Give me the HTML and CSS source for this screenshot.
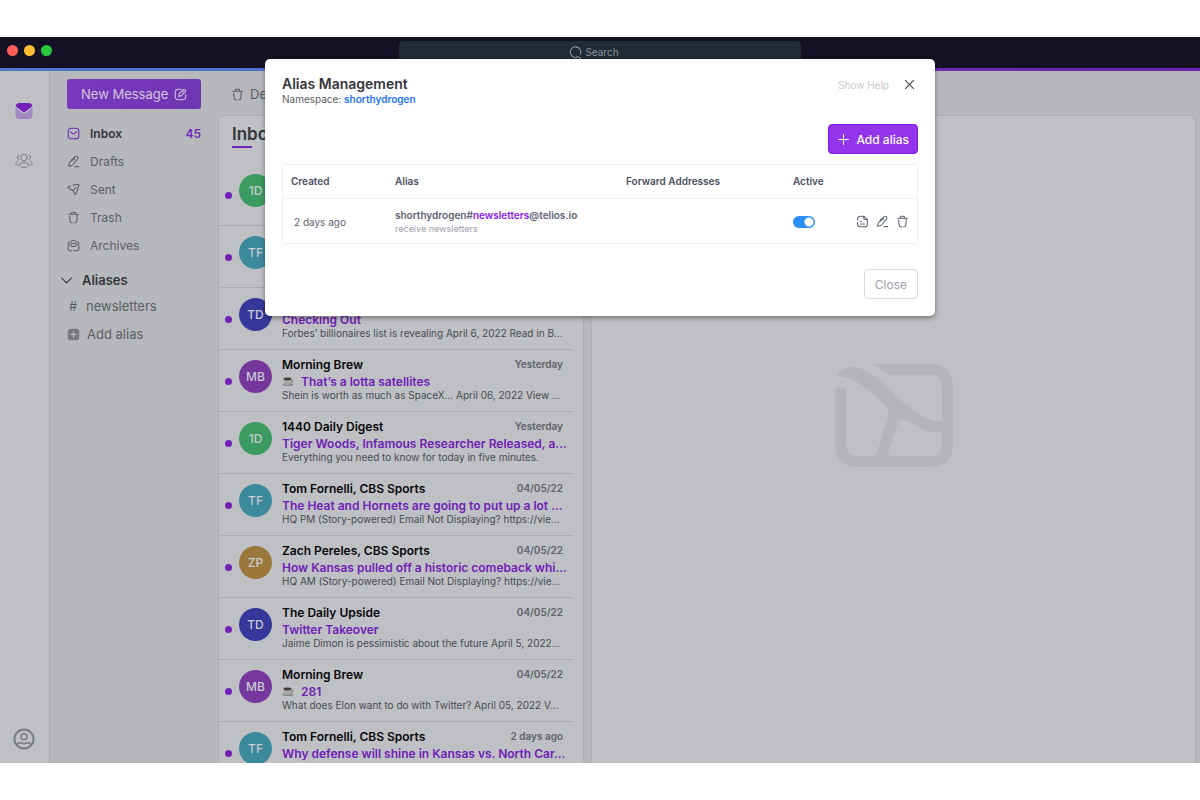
FILE: index.html
```html
<!DOCTYPE html>
<html lang="en">
<head>
<meta charset="utf-8">
<title>Telios</title>
<link rel="stylesheet" href="styles.css">
</head>
<body>
<svg class="defs" aria-hidden="true">
  <symbol id="trash" viewBox="0 0 16 16"><path d="M2 4h12M5.6 4V2.4Q5.6 1.5 6.5 1.5h3q.9 0 .9.9V4M3.3 6.3l.7 7q.1 1.2 1.3 1.2H7M12.7 4.5L12 13.3q-.1 1.2-1.3 1.2H9.5"/></symbol>
  <symbol id="pen" viewBox="0 0 16 16"><path d="M5 6.300l5.300-4.300q1.400-1.100 2.600.1 1.200 1.300.1 2.600L7.200 12q-.6.700-1.500.9L2 13.800l.8-3.500q.2-.9.900-1.500L9.500 4.500M10 14.300h4.500"/></symbol>
</svg>
<div class="window">
  <header class="titlebar">
    <div class="lights"><span class="light red"></span><span class="light yellow"></span><span class="light green"></span></div>
    <button class="search" type="button">
      <svg class="icon" viewBox="0 0 16 16"><path d="M11.600 13A6.500 6.500 0 1 1 14 10.200M13 14l1.300 1.300"/></svg>
      Search
    </button>
  </header>
  <div class="stripe"></div>
  <div class="app">
    <nav class="rail" aria-label="Sections">
      <a class="rail-link" href="#mail" aria-label="Mail">
        <svg class="rail-icon" viewBox="0 0 18 18"><path class="mail-body" d="M.5 5.500L7.500 11.300q1.500 1.100 3 0l7-5.800V13q0 4-4 4h-9q-4 0-4-4z"/><path class="mail-flap" d="M.7 4.200Q1 1 4.500 1h9q3.500 0 3.800 3.200L10.300 9.800q-1.300 1-2.600 0z"/></svg>
      </a>
      <a class="rail-link" href="#contacts" aria-label="Contacts">
        <svg class="rail-icon line" viewBox="0 0 18 18"><circle cx="9" cy="5.500" r="3.300"/><path d="M4 3a2.500 2.500 0 0 0 0 4.700M14 3a2.500 2.500 0 0 1 0 4.700M3 9.800q-2.500.4-2.500 1.800 0 1 1.800 1.400M15 9.800q2.500.4 2.500 1.800 0 1-1.800 1.400M5 14.300q-1-1-.4-2 1.300-1.700 4.400-1.700 3.300 0 4.400 1.700.5 1.100-.4 2M11 15.300q-2.300.6-4.300-.1"/></svg>
      </a>
      <a class="rail-link profile" href="#account" aria-label="Account">
        <svg class="rail-icon user" viewBox="0 0 22 22"><circle class="ring" cx="11" cy="11" r="9.600"/><circle cx="11" cy="8.800" r="3"/><path d="M4.200 17.500q.5-2.700 2.800-2.800 1.600 0 2.700.5 1.300.4 2.600 0 1.100-.5 2.700-.5 2.300.1 2.800 2.800"/></svg>
      </a>
    </nav>
    <aside class="sidebar">
      <button class="compose" type="button">New Message
        <svg class="icon" viewBox="0 0 16 16"><path d="M9 1.500H5.500q-4 0-4 4v5q0 4 4 4h5q4 0 4-4V8M6.500 6.800L11.400 2q.9-.9 1.900.1l.7.700q.9.900 0 1.800L9.100 9.500 5.800 10.300z M10.300 3.200l2.400 2.400"/></svg>
      </button>
      <ul class="folders">
        <li><a class="folder current" href="#inbox"><svg class="icon" viewBox="0 0 16 16"><rect x="1.500" y="1.500" width="13" height="13" rx="3.500"/><path d="M4.500 6l2.400 2.200q1.100.9 2.200 0L11.500 6"/></svg>Inbox<span class="count">45</span></a></li>
        <li><a class="folder" href="#drafts"><svg class="icon"><use href="#pen"/></svg>Drafts</a></li>
        <li><a class="folder" href="#sent"><svg class="icon" viewBox="0 0 16 16"><path d="M7.500 2.800l6.200-1.300q1.200-.2.900 1L11.200 13q-.7 2-1.700.2L7.500 9.500 11 5.500M7.500 9.500L2.200 6.500Q.3 5.200 2.200 4.200L4.500 3.600"/></svg>Sent</a></li>
        <li><a class="folder" href="#trash-folder"><svg class="icon"><use href="#trash"/></svg>Trash</a></li>
        <li><a class="folder" href="#archives"><svg class="icon" viewBox="0 0 16 16"><path d="M2 7.500Q.7 4.800 3.200 3.700 4.800 3.400 5 3q3-2.500 6 0 .2.400 1.800.7 2.500 1.100 1.200 3.800M1.200 9v2.500q0 3 3 3h1.500M14.800 9v2.500q0 3-3 3H8M1.500 7.500h3.200l1.500 1.800h3.600l1.500-1.800h3.200M5 5.500h6"/></svg>Archives</a></li>
      </ul>
      <button class="group" type="button"><svg class="icon" viewBox="0 0 16 16"><path d="M2 5l6 6 6-6"/></svg>Aliases</button>
      <ul class="aliases">
        <li><a class="alias" href="#newsletters"><span class="hash">#</span>newsletters</a></li>
        <li><button class="alias" type="button"><svg class="icon solid" viewBox="0 0 16 16"><rect x="1.500" y="1.500" width="13" height="13" rx="3"/><path d="M8 5v6M5 8h6"/></svg>Add alias</button></li>
      </ul>
    </aside>
    <main class="main">
      <div class="toolbar"><button class="tool" type="button"><svg class="icon"><use href="#trash"/></svg>Delete</button></div>
      <div class="panes">
        <section class="list">
          <h1 class="list-title">Inbox</h1>
          <article class="mail"><span class="dot"></span><span class="avatar green-bg">1D</span></article>
          <article class="mail"><span class="dot"></span><span class="avatar teal-bg">TF</span></article>
          <article class="mail"><span class="dot"></span><span class="avatar blue-bg">TD</span><div class="text"><div class="top"></div><p class="subject">Checking Out</p><p class="preview">Forbes’ billionaires list is revealing April 6, 2022 Read in B...</p></div></article>
          <article class="mail"><span class="dot"></span><span class="avatar purple-bg">MB</span><div class="text"><div class="top"><h2 class="from">Morning Brew</h2><time class="date">Yesterday</time></div><p class="subject"><svg class="cup" viewBox="0 0 12 12"><ellipse cx="6" cy="9.500" rx="5.500" ry="1.600" fill="#85878b"/><path d="M1.500 4h8q0 5-2.500 6H4Q1.500 9 1.500 4z" fill="#aaa9aa"/><ellipse cx="5.500" cy="4" rx="4" ry="1.400" fill="#493b36"/><path d="M9.500 5q2.300 0 1 1.800l-1.700.6" fill="none" stroke="#777"/></svg>That’s a lotta satellites</p><p class="preview">Shein is worth as much as SpaceX... April 06, 2022 View ...</p></div></article>
          <article class="mail"><span class="dot"></span><span class="avatar green-bg">1D</span><div class="text"><div class="top"><h2 class="from">1440 Daily Digest</h2><time class="date">Yesterday</time></div><p class="subject">Tiger Woods, Infamous Researcher Released, a...</p><p class="preview">Everything you need to know for today in five minutes.</p></div></article>
          <article class="mail"><span class="dot"></span><span class="avatar teal-bg">TF</span><div class="text"><div class="top"><h2 class="from">Tom Fornelli, CBS Sports</h2><time class="date">04/05/22</time></div><p class="subject">The Heat and Hornets are going to put up a lot ...</p><p class="preview">HQ PM (Story-powered) Email Not Displaying? https://vie...</p></div></article>
          <article class="mail"><span class="dot"></span><span class="avatar gold-bg">ZP</span><div class="text"><div class="top"><h2 class="from">Zach Pereles, CBS Sports</h2><time class="date">04/05/22</time></div><p class="subject">How Kansas pulled off a historic comeback whi...</p><p class="preview">HQ AM (Story-powered) Email Not Displaying? https://vie...</p></div></article>
          <article class="mail"><span class="dot"></span><span class="avatar blue-bg">TD</span><div class="text"><div class="top"><h2 class="from">The Daily Upside</h2><time class="date">04/05/22</time></div><p class="subject">Twitter Takeover</p><p class="preview">Jaime Dimon is pessimistic about the future April 5, 2022...</p></div></article>
          <article class="mail"><span class="dot"></span><span class="avatar purple-bg">MB</span><div class="text"><div class="top"><h2 class="from">Morning Brew</h2><time class="date">04/05/22</time></div><p class="subject"><svg class="cup" viewBox="0 0 12 12"><ellipse cx="6" cy="9.500" rx="5.500" ry="1.600" fill="#85878b"/><path d="M1.500 4h8q0 5-2.500 6H4Q1.500 9 1.500 4z" fill="#aaa9aa"/><ellipse cx="5.500" cy="4" rx="4" ry="1.400" fill="#493b36"/><path d="M9.500 5q2.300 0 1 1.800l-1.700.6" fill="none" stroke="#777"/></svg>281</p><p class="preview">What does Elon want to do with Twitter? April 05, 2022 V...</p></div></article>
          <article class="mail"><span class="dot"></span><span class="avatar teal-bg">TF</span><div class="text"><div class="top"><h2 class="from">Tom Fornelli, CBS Sports</h2><time class="date">2 days ago</time></div><p class="subject">Why defense will shine in Kansas vs. North Car...</p></div></article>
        </section>
        <section class="reader" aria-label="Message">
          <svg class="mark" viewBox="0 0 150 130"><path d="M55 14H111q23 0 23 23V94q0 23-23 23H39q-23 0-23-23V38q5-2 11 0V94q0 12 12 12h14q4 0 6-6l9.500-32q2-8-2.500-12.500C53 42 36 27 18.500 25.500 23 17.500 33 14 44 19.500 61 28 73 44 89 56q16 13 26 15h8V37q0-12-12-12H69.500zM123 82q-11 2-22-4-7-4-13-7.200-6-3-9 2.200L70 100q-1.500 6 4 6h37q12 0 12-12z" fill-rule="evenodd"/></svg>
        </section>
      </div>
    </main>
  </div>
  <div class="overlay">
    <section class="dialog" role="dialog" aria-labelledby="dialog-title">
      <div class="dialog-head">
        <div>
          <h2 class="dialog-title" id="dialog-title">Alias Management</h2>
          <p class="namespace">Namespace: <span class="ns">shorthydrogen</span></p>
        </div>
        <div class="head-actions">
          <button class="help" type="button">Show Help</button>
          <button class="dismiss" type="button" aria-label="Dismiss"><svg class="icon" viewBox="0 0 16 16"><path d="M3 3l10 10M13 3L3 13"/></svg></button>
        </div>
      </div>
      <button class="add" type="button"><svg class="icon" viewBox="0 0 16 16"><path d="M8 2v12M2 8h12"/></svg>Add alias</button>
      <div class="frame">
        <table class="table">
          <thead><tr><th class="c-created">Created</th><th class="c-alias">Alias</th><th class="c-forward">Forward Addresses</th><th class="c-active">Active</th><th aria-label="Actions"></th></tr></thead>
          <tbody><tr>
            <td class="created">2 days ago</td>
            <td><p class="address">shorthydrogen#<span class="tag">newsletters</span>@telios.io</p><p class="note">receive newsletters</p></td>
            <td></td>
            <td><input class="toggle" type="checkbox" aria-label="Active" checked></td>
            <td><div class="actions">
              <button class="act" type="button" aria-label="Details"><svg class="icon" viewBox="0 0 16 16"><path d="M2 6V5q0-3.500 3.500-3.500h4.300L14 5.700V11q0 3.500-3.500 3.500h-5Q2 14.500 2 11V9M9.500 2v2q0 1.500 1.500 1.500h2.500M5.500 8h1.500M5.500 11h5"/></svg></button>
              <button class="act" type="button" aria-label="Edit"><svg class="icon"><use href="#pen"/></svg></button>
              <button class="act" type="button" aria-label="Delete"><svg class="icon"><use href="#trash"/></svg></button>
            </div></td>
          </tr></tbody>
        </table>
      </div>
      <button class="close" type="button">Close</button>
    </section>
  </div>
</div>
</body>
</html>
```
FILE: styles.css
```css
* { box-sizing: border-box; }
body { margin: 0; background: #fff; font-family: Inter, "Liberation Sans", sans-serif; font-size: 12px; color: #5c5e64; }
h1, h2, p, ul { margin: 0; padding: 0; list-style: none; }
button { font: inherit; color: inherit; background: none; border: 0; padding: 0; }
a { color: inherit; text-decoration: none; }
.defs { display: none; }
.icon { width: 13px; height: 13px; flex: none; fill: none; stroke: currentColor; stroke-width: 1.3; stroke-linecap: round; stroke-linejoin: round; }

.window { position: relative; display: flex; flex-direction: column; height: calc(100vh - 74px); margin: 37px 0; overflow: hidden; background: #b6b8bc; }
.titlebar { display: flex; justify-content: center; flex: none; height: 31px; background: #151125; position: relative; padding-top: 4px; }
.lights { position: absolute; left: 7px; top: 8px; display: flex; gap: 6px; }
.light { width: 11px; height: 11px; border-radius: 50%; }
.red { background: #ff5f57; }
.yellow { background: #febc2e; }
.green { background: #28c840; }
.search { display: flex; align-items: center; justify-content: center; gap: 3px; width: 402px; height: 22px; padding-right: 12px; border-radius: 4px 4px 0 0; background: #222a36; color: #8d9299; font-size: 10px; }
.stripe { flex: none; height: 3px; background: linear-gradient(90deg, #4a7cc8, #4c6fc8 22%, #6c2cb4 78%, #6c22b2); }

.app { display: flex; flex: 1; min-height: 0; }
.rail { display: flex; flex-direction: column; flex: none; width: 50px; padding: 31px 2px 13px 0; align-items: center; background: #bec0c4; border-right: 1px solid #adafb4; color: #777a80; }
.rail-link { display: flex; margin-bottom: 32px; }
.rail-icon { width: 18px; height: 18px; }
.line, .user { fill: none; stroke: currentColor; stroke-linecap: round; }
.mail-body { fill: #a188c5; }
.mail-flap { fill: #7020b8; }
.profile { margin: auto 0 0; }
.user { width: 22px; height: 22px; stroke-width: 1.5; }
.ring { stroke-width: 2; }

.sidebar { flex: none; width: 168px; padding: 8px 17px; }
.compose { display: flex; align-items: center; justify-content: space-between; width: 134px; height: 30px; padding: 0 14px; border-radius: 3px; background: linear-gradient(90deg, #7a38be, #6f35b1); color: #cfc6dc; font-size: 12px; margin-bottom: 10px; }
.compose { font-size: 13px; }
.folder { display: flex; align-items: center; gap: 10px; height: 28px; }
.current { color: #34353a; font-weight: 600; }
.current .icon, .count { color: #7128b8; }
.count { margin-left: auto; }
.group { display: flex; align-items: center; gap: 9px; height: 24px; margin: 9px 0 0 -7px; color: #34353a; font-size: 13px; font-weight: 600; }
.alias { display: flex; align-items: center; gap: 7px; height: 28px; font-size: 13px; }
.hash { width: 12px; text-align: center; }
.solid { fill: #77797e; stroke: #77797e; }
.solid path { stroke: #c1c3c7; }

.main { display: flex; flex-direction: column; flex: 1; min-width: 0; padding-right: 4px; }
.toolbar { flex: none; height: 44px; padding: 8px 13px; }
.tool { display: flex; align-items: center; gap: 6px; height: 30px; font-size: 13px; }
.panes { display: flex; gap: 7px; flex: 1; min-height: 0; }
.list, .reader { background: #bec0c4; border: 1px solid #adafb3; border-bottom: 0; border-radius: 6px 6px 0 0; }
.list { flex: none; width: 366px; padding-right: 10px; overflow: hidden; }
.reader { flex: 1; display: flex; align-items: center; justify-content: center; padding-bottom: 50px; }
.mark { width: 150px; height: 130px; fill: #b3b5b9; }
.list-title { width: 80px; height: 32px; margin: 0 0 16px 13px; padding-top: 8px; font-size: 17px; line-height: 21px; font-weight: 600; color: #34353a; background: linear-gradient(#7128b8, #7128b8) 0 100% / 20px 2px no-repeat; }
.mail { display: flex; height: 62px; gap: 10px; padding: 6px 10px 0 6px; border-bottom: 1px solid #a9abaf; white-space: nowrap; }
.dot { flex: none; width: 7px; height: 7px; margin: 22px -3px 0 0; border-radius: 50%; background: #7020b8; }
.avatar { flex: none; width: 33px; height: 33px; margin-top: 4px; border-radius: 50%; color: #c8cbd2; text-align: center; line-height: 33px; font-size: 12px; font-weight: 500; }
.green-bg { background: #3c9b61; }
.teal-bg { background: #3b8a9c; }
.blue-bg { background: #36379b; }
.purple-bg { background: #75379b; }
.gold-bg { background: #9b773b; }
.text { flex: 1; min-width: 0; }
.top { display: flex; justify-content: space-between; align-items: center; height: 16px; }
.from { font-size: 12px; font-weight: 600; color: #08080b; }
.date { font-size: 10px; font-weight: 600; color: #606268; }
.subject { display: flex; align-items: center; height: 18px; font-size: 12px; font-weight: 600; color: #6f20b6; }
.cup { width: 12px; height: 12px; margin-right: 7px; }
.preview { font-size: 10px; line-height: 10px; color: #494b50; }

.overlay { position: absolute; inset: 22px 0 auto; display: flex; justify-content: center; padding: 0 16px; }
.dialog { display: flex; flex-direction: column; align-items: flex-end; width: 670px; padding: 16px 17px 17px; border-radius: 5px; background: #fff; box-shadow: 0 2px 5px rgba(0,0,0,.4); }
.dialog-head { display: flex; align-items: flex-start; justify-content: space-between; width: 100%; height: 49px; }
.dialog-title { font-size: 14px; line-height: 17px; font-weight: 600; color: #35363b; }
.namespace { font-size: 10px; line-height: 15px; }
.ns { color: #1b74f4; font-weight: 600; }
.head-actions { display: flex; align-items: center; gap: 14px; height: 19px; }
.help { color: #c8c9d0; font-size: 10px; }
.dismiss { display: flex; padding-right: 2px; color: #3f4045; }
.add { display: flex; align-items: center; gap: 6px; height: 30px; padding: 0 8px; border: 1px solid #8118e8; border-radius: 4px; background: #9333ea; color: #fff; font-size: 12px; font-weight: 500; }
.frame { width: 100%; margin: 10px 0 25px; border: 1px solid #f1f1f4; border-radius: 3px; }
.table { width: 100%; table-layout: fixed; border-collapse: collapse; font-size: 10px; color: #5d6372; text-align: left; }
.table th, .table td { padding: 0 0 0 8px; }
.table th { height: 33px; font-weight: 600; color: #4b5163; border-bottom: 1px solid #f1f1f4; }
.table td { height: 45px; padding-top: 2px; }
.c-created { width: 104px; }
.c-alias { width: 231px; }
.c-forward { width: 167px; }
.c-active { width: 56px; }
.table .created { padding-left: 11px; }
.address { font-weight: 600; line-height: 14px; }
.tag { color: #8419e8; }
.note { color: #9ca0ab; font-size: 9px; line-height: 13px; }
.toggle { appearance: none; display: block; width: 22px; height: 12px; margin: 0; border-radius: 6px; background: radial-gradient(circle at 16px 6px, #fff 4px, #2b8ff8 5px); }
.actions { display: flex; gap: 7px; justify-content: flex-end; padding-right: 8px; }
.act { display: flex; }
.close { height: 30px; padding: 0 10px; border: 1px solid #d9dae2; border-radius: 4px; color: #9c9fab; font-size: 12px; }
```
